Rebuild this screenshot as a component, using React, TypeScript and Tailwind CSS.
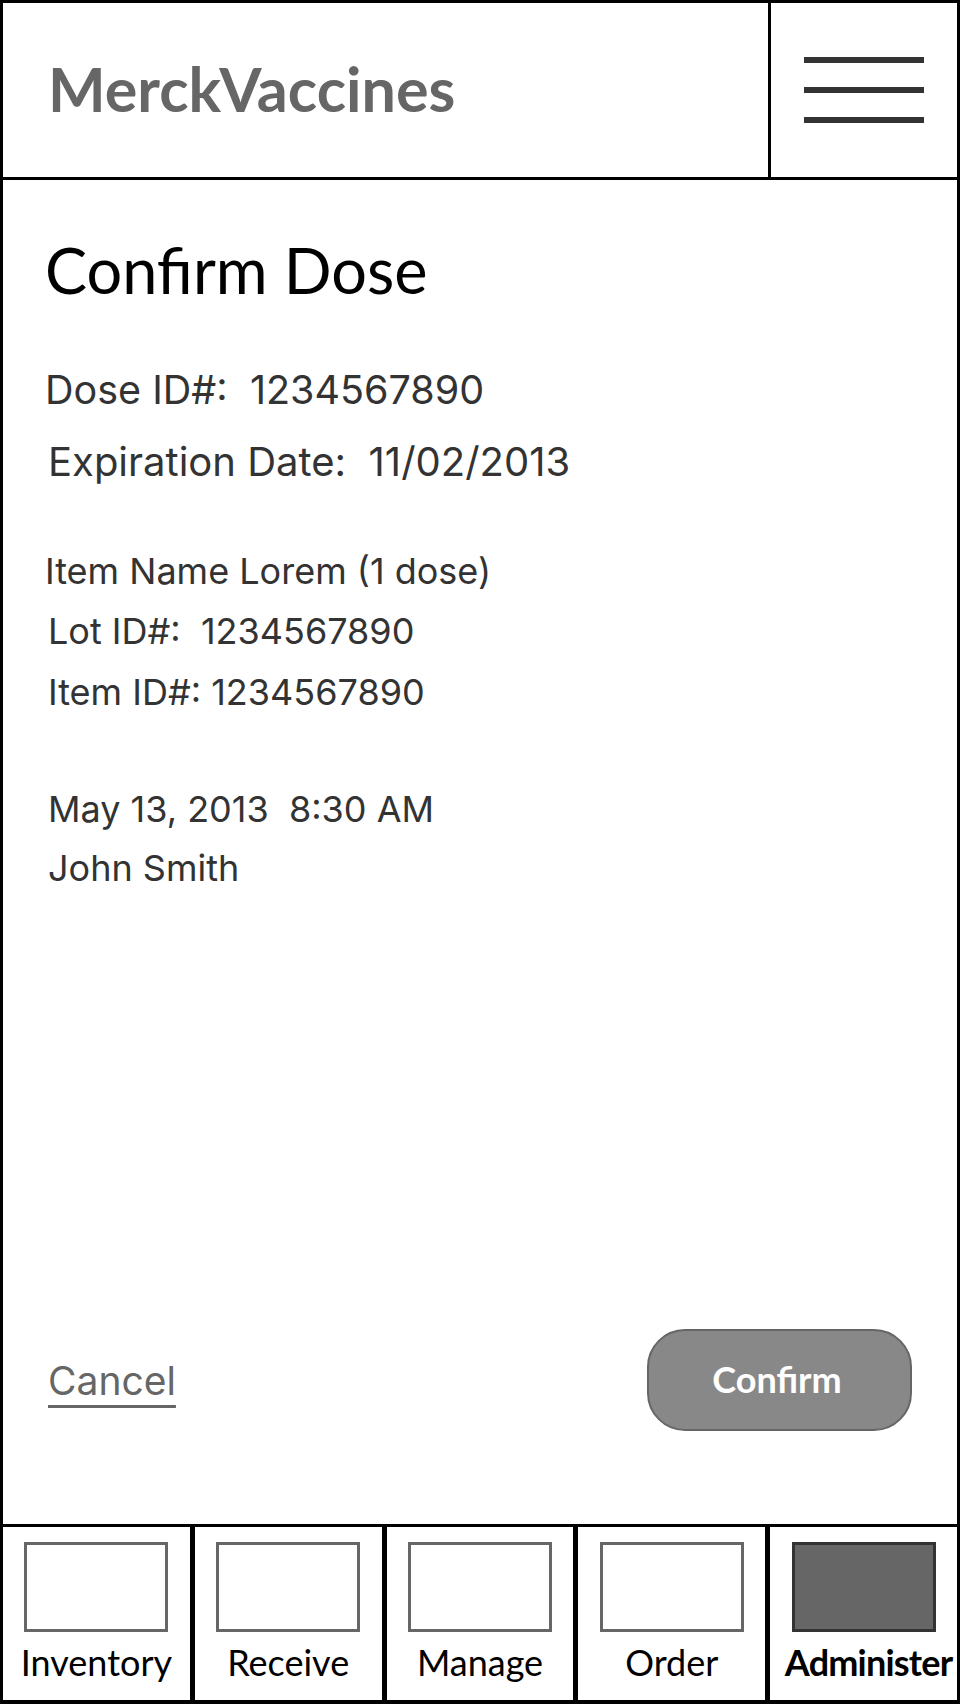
const tabs = [
  { label: 'Inventory', active: false },
  { label: 'Receive', active: false },
  { label: 'Manage', active: false },
  { label: 'Order', active: false },
  { label: 'Administer', active: true },
];

const lato = "font-['Lato','Liberation_Sans',sans-serif]";
const inter = "font-['Inter','Liberation_Sans',sans-serif]";

export default function App() {
  return (
    <div className="w-[960px] h-[1704px] flex flex-col bg-white border-x-[3px] border-t-[3px] border-b-[4px] border-black">
      {/* header */}
      <header className="h-[177px] flex border-b-[3px] border-black shrink-0">
        <div className="flex-1 flex items-center pl-[45px] border-r-[3px] border-black">
          <span className={`${lato} font-bold text-[61px] leading-none text-[#666] -mt-[3px]`}>MerckVaccines</span>
        </div>
        <div className="w-[186px] flex flex-col items-center justify-center gap-[24px]">
          <div className="w-[120px] h-[6px] bg-[#333]" />
          <div className="w-[120px] h-[6px] bg-[#333]" />
          <div className="w-[120px] h-[6px] bg-[#333]" />
        </div>
      </header>

      {/* content */}
      <main className="flex-1 flex flex-col">
        <h1 className={`${lato} text-[63px] leading-none text-black mt-[58px] ml-[42px]`}>Confirm Dose</h1>

        <div className={`${inter} text-[36px] leading-none text-[#333]`}>
          <p className="text-[39.5px] mt-[70px] ml-[42px]">Dose ID#:&nbsp; 1234567890</p>
          <p className="text-[40px] mt-[31px] ml-[45px]">Expiration Date:&nbsp; 11/02/2013</p>

          <p className="mt-[71px] ml-[42px]">Item Name Lorem (1 dose)</p>
          <p className="mt-[24px] ml-[45px]">Lot ID#:&nbsp; 1234567890</p>
          <p className="mt-[25px] ml-[45px]">Item ID#: 1234567890</p>

          <p className="mt-[81px] ml-[45px]">May 13, 2013&nbsp; 8:30 AM</p>
          <p className="mt-[23px] ml-[45px]">John Smith</p>
        </div>

        <div className="flex-1" />

        <div className="flex items-center justify-between pl-[45px] pr-[45px] pb-[93px]">
          <a className={`${inter} text-[39px] leading-none text-[#666] underline decoration-[3px] underline-offset-[10px]`}>Cancel</a>
          <button className="w-[265px] h-[102px] rounded-[38px] bg-[#888] border-2 border-[#666] flex items-center justify-center">
            <span className={`${lato} font-bold text-[36px] leading-none text-white -mt-[3px] -ml-[5px]`}>Confirm</span>
          </button>
        </div>
      </main>

      {/* bottom nav */}
      <nav className="h-[176px] shrink-0 flex border-t-[3px] border-black">
        {tabs.map((tab, i) => (
          <div
            key={tab.label}
            className={`flex-1 flex flex-col items-center pt-[15px] ${i < tabs.length - 1 ? 'border-r-[5px] border-black' : ''}`}
          >
            <div
              className={`w-[144px] h-[90px] border-[3px] ${tab.active ? 'bg-[#666] border-[#333]' : 'bg-white border-[#666]'}`}
            />
            <span
              className={`${lato} text-[36px] leading-none text-black mt-[12px] whitespace-nowrap ${tab.active ? 'font-bold tracking-[-0.8px] ml-[10px]' : ''}`}
            >
              {tab.label}
            </span>
          </div>
        ))}
      </nav>
    </div>
  );
}
